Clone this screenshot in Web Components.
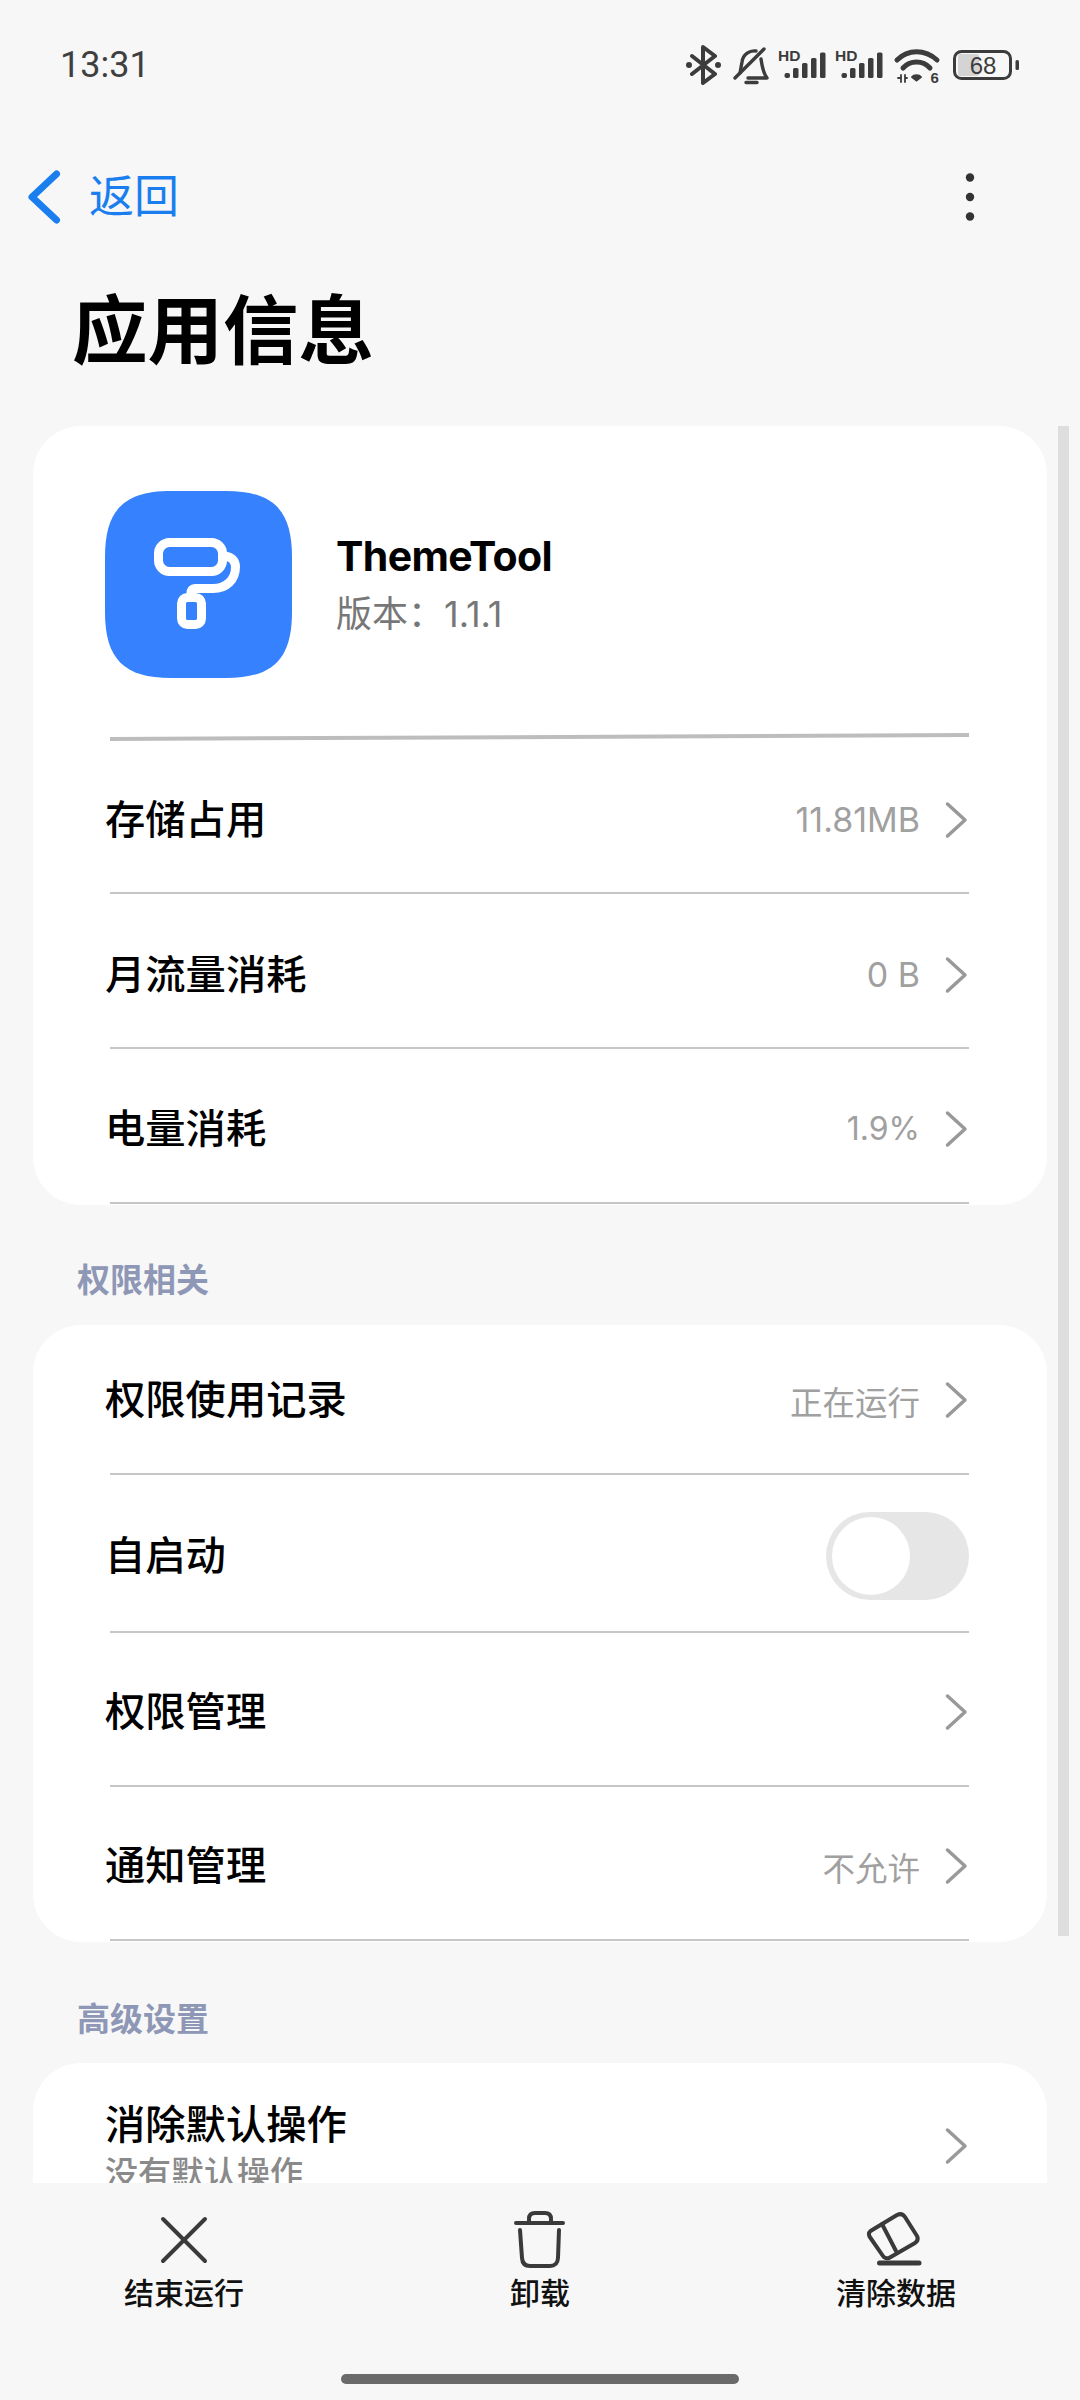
<!DOCTYPE html>
<html lang="zh-CN">
<head>
<meta charset="utf-8">
<title>应用信息</title>
<style>
  html, body { margin: 0; background: #f7f7f7; }
  body { font-family: Inter, "Noto Sans CJK SC", sans-serif; width: 1080px; height: 2400px; overflow: hidden; }
  app-info-page { height: 2400px; }
</style>
</head>
<body>
<app-info-page>
  <status-bar slot="top" time="13:31"></status-bar>
  <nav-bar slot="top" back="返回"></nav-bar>
  <page-title slot="top">应用信息</page-title>

  <settings-card>
    <app-header name="ThemeTool" version="版本：1.1.1"></app-header>
    <settings-row>存储占用<span slot="value">11.81MB</span></settings-row>
    <settings-row>月流量消耗<span slot="value">0 B</span></settings-row>
    <settings-row style="--row-pt:6px;--val:32px">电量消耗<span slot="value">1.9%</span></settings-row>
  </settings-card>

  <section-label>权限相关</section-label>
  <settings-card>
    <settings-row style="--row-h:150px;--row-pt:2px;--val:32.5px">权限使用记录<span slot="value">正在运行</span></settings-row>
    <settings-row nochevron style="--row-h:158px;--row-pt:6px">自启动<toggle-switch slot="end"></toggle-switch></settings-row>
    <settings-row style="--row-h:154px;--row-pt:6px">权限管理</settings-row>
    <settings-row style="--row-h:154px;--row-pt:6px;--val:32.5px">通知管理<span slot="value">不允许</span></settings-row>
  </settings-card>

  <section-label style="--label-h:121px;--label-pt:52px">高级设置</section-label>
  <settings-card>
    <settings-row style="--row-h:168px;--row-pt:0px;--main-shift:4px">消除默认操作<span slot="sub">没有默认操作</span></settings-row>
  </settings-card>

  <action-bar slot="bottom"></action-bar>
</app-info-page>

<script>
class AppInfoPage extends HTMLElement {
    connectedCallback() {
        this.attachShadow({mode: 'open'});
        this.shadowRoot.innerHTML = `
        <style>
            :host { display: flex; flex-direction: column; width: 1080px; background: #f7f7f7; }
            #scroller {
                position: relative;
                flex: 1;
                min-height: 0;
                overflow: hidden;
                padding: 0 33px;
            }
            /* scrollbar lies over the list */
            #thumb {
                position: absolute;
                left: 1058px;
                top: 0;
                width: 11px;
                height: 1510px;
                background: #dedede;
            }
        </style>
        <slot name="top"></slot>
        <div id="scroller"><slot></slot><div id="thumb"></div></div>
        <slot name="bottom"></slot>
        `;
    }
}

class StatusBar extends HTMLElement {
    connectedCallback() {
        this.attachShadow({mode: 'open'});
        this.shadowRoot.innerHTML = `
        <style>
            :host { display: flex; align-items: center; justify-content: space-between; height: 130px; padding: 0 59px 0 60px; box-sizing: border-box; }
            #time { font: 400 36px Roboto, sans-serif; color: #3f3f3f; }
            svg { display: block; font-family: "Liberation Sans", sans-serif; }
        </style>
        <span id="time">${this.getAttribute('time')}</span>
        <svg width="335" height="40" viewBox="687 45 335 40" fill="none" stroke="#3c3c3c" stroke-linecap="round" stroke-linejoin="round">
            <!-- bluetooth -->
            <path d="M693 56 L716 74 L704 83 V47 L716 56 L693 74" stroke-width="4"/>
            <circle cx="690" cy="65" r="3" fill="#3c3c3c" stroke="none"/>
            <circle cx="719" cy="65" r="3" fill="#3c3c3c" stroke="none"/>
            <!-- muted bell -->
            <path d="M741 73 L743 62 C744 54 751 50 757 51 M762 59 C763 66 764 73 768 78 H749 M747 82.5 H758" stroke-width="3.4"/>
            <path d="M736 78 L765 49" stroke-width="3.4"/>
            <!-- signal 1 -->
            <g fill="#3c3c3c" stroke="none">
                <text x="779" y="61" font-size="15.5" font-weight="700">HD</text>
                <rect x="785.5" y="73" width="5.5" height="5" rx="2"/>
                <rect x="794" y="68" width="5.5" height="10" rx="1.5"/>
                <rect x="803" y="63" width="5.5" height="15" rx="1.5"/>
                <rect x="812" y="58" width="5.5" height="20" rx="1.5"/>
                <rect x="821" y="52.5" width="5.5" height="25.5" rx="1.5"/>
                <!-- signal 2 -->
                <text x="836" y="61" font-size="15.5" font-weight="700">HD</text>
                <rect x="842.5" y="73" width="5.5" height="5" rx="2"/>
                <rect x="851" y="68" width="5.5" height="10" rx="1.5"/>
                <rect x="860" y="63" width="5.5" height="15" rx="1.5"/>
                <rect x="869" y="58" width="5.5" height="20" rx="1.5"/>
                <rect x="878" y="52.5" width="5.5" height="25.5" rx="1.5"/>
            </g>
            <!-- wifi 6 -->
            <path d="M898 60 C909 49 926 49 938 60" stroke-width="5"/>
            <path d="M904 68 C911 60 924 60 931 68" stroke-width="5"/>
            <path d="M913 77 C915 74.5 920 74.5 922 77 L917.5 80.5 Z" fill="#3c3c3c" stroke-width="2"/>
            <path d="M899 78 H902 M902 75 V82 M906 75 V82 M906 78 H908" stroke-width="1.8"/>
            <text x="931.5" y="82.5" font-size="15" font-weight="700" fill="#3c3c3c" stroke="none">6</text>
            <!-- battery -->
            <rect x="959" y="54" width="21" height="22" rx="2" fill="#d4d4d4" stroke="none"/>
            <rect x="955.5" y="51.5" width="56" height="27" rx="7" stroke-width="3"/>
            <rect x="1016.5" y="60" width="3.5" height="10" rx="1.5" fill="#3c3c3c" stroke="none"/>
            <text x="984" y="73.5" font-size="24" text-anchor="middle" fill="#3c3c3c" stroke="none">68</text>
        </svg>
        `;
    }
}

class NavBar extends HTMLElement {
    connectedCallback() {
        this.attachShadow({mode: 'open'});
        this.shadowRoot.innerHTML = `
        <style>
            :host { display: flex; align-items: center; height: 134px; padding: 0 105px 0 27px; }
            svg { display: block; }
            #label { margin-left: 28px; font-size: 45px; line-height: 134px; color: #1a7eef; flex: 1; }
        </style>
        <svg width="34" height="54" viewBox="0 0 34 54" fill="none" stroke="#1a7eef" stroke-width="7" stroke-linecap="round" stroke-linejoin="round">
            <path d="M29.5 4 L5 27 L29.5 50"/>
        </svg>
        <span id="label">${this.getAttribute('back')}</span>
        <svg width="10" height="50" viewBox="0 0 10 50" fill="#333">
            <circle cx="5" cy="5.5" r="4.2"/>
            <circle cx="5" cy="25" r="4.2"/>
            <circle cx="5" cy="44.5" r="4.2"/>
        </svg>
        `;
    }
}

class PageTitle extends HTMLElement {
    connectedCallback() {
        this.attachShadow({mode: 'open'});
        this.shadowRoot.innerHTML = `
        <style>
            :host { display: block; height: 162px; box-sizing: border-box; padding: 0 0 28px 72px; font-size: 75.5px; line-height: 134px; font-weight: 700; color: #000; }
        </style>
        <slot></slot>
        `;
    }
}

class SettingsCard extends HTMLElement {
    connectedCallback() {
        this.attachShadow({mode: 'open'});
        this.shadowRoot.innerHTML = `
        <style>
            :host { display: block; width: 1014px; background: #fff; border-radius: 48px; padding-bottom: 1px; }
        </style>
        <slot></slot>
        `;
    }
}

class AppHeader extends HTMLElement {
    connectedCallback() {
        this.attachShadow({mode: 'open'});
        this.shadowRoot.innerHTML = `
        <style>
            :host { display: block; }
            #top { display: flex; align-items: center; padding: 65px 0 55px 72px; }
            #icon { display: block; width: 187px; height: 187px; flex: none; }
            #text { margin-left: 44px; }
            #name { font-size: 41px; line-height: 50px; font-weight: 700; color: #000; letter-spacing: -0.6px; }
            #version { font-size: 36px; line-height: 48px; color: #777; margin-top: 9px; }
            #sep { height: 8px; margin: 0 78px -2px 77px; background: #bdbdbd; clip-path: polygon(0 4px, 100% 0, 100% 4px, 0 100%); }
        </style>
        <div id="top">
            <svg id="icon" viewBox="0 0 187 187">
                <path d="M66 0 H121 C168 0 187 19 187 66 V121 C187 168 168 187 121 187 H66 C19 187 0 168 0 121 V66 C0 19 19 0 66 0 Z" fill="#3681fd"/>
                <g fill="none" stroke="#fff" stroke-width="9" stroke-linecap="round" stroke-linejoin="round">
                    <rect x="53.5" y="51.5" width="64" height="29" rx="11"/>
                    <path d="M120 65 C127 66 130.5 70 130.5 76 C130.5 88 122 97.5 108 97.5 H90 Q86 97.5 86 102 V106"/>
                    <rect x="76.5" y="106.5" width="20" height="27" rx="6"/>
                </g>
            </svg>
            <div id="text">
                <div id="name">${this.getAttribute('name')}</div>
                <div id="version">${this.getAttribute('version')}</div>
            </div>
        </div>
        <div id="sep"></div>
        `;
    }
}

class SettingsRow extends HTMLElement {
    connectedCallback() {
        this.attachShadow({mode: 'open'});
        const chevron = this.hasAttribute('nochevron') ? '' : `
            <svg id="chev" width="24" height="40" viewBox="0 0 24 40" fill="none" stroke="#999" stroke-width="3.5" stroke-linecap="round" stroke-linejoin="round">
                <path d="M3.5 4 L21 20 L3.5 36"/>
            </svg>`;
        this.shadowRoot.innerHTML = `
        <style>
            :host { display: flex; flex-direction: column; box-sizing: border-box; height: var(--row-h, 155px); padding: var(--row-pt, 8px) 78px 0 72px; }
            #body { flex: 1; min-height: 0; display: flex; align-items: center; }
            #main { flex: 1; margin-top: var(--main-shift, 0); font-size: 40.3px; line-height: 50px; font-weight: 500; color: #000; }
            #sub { display: block; font-size: 33px; line-height: 46px; font-weight: 500; color: #8a8a8a; }
            #value { font-size: var(--val, 34px); color: #a0a0a0; }
            #chev { display: block; margin: 0 1px 0 24px; flex: none; }
            #line { height: 2px; margin-left: 5px; background: #c6c6c6; flex: none; }
        </style>
        <div id="body">
            <div id="main"><slot></slot><span id="sub"><slot name="sub"></slot></span></div>
            <span id="value"><slot name="value"></slot></span>
            <slot name="end"></slot>
            ${chevron}
        </div>
        <div id="line"></div>
        `;
    }
}

class SectionLabel extends HTMLElement {
    connectedCallback() {
        this.attachShadow({mode: 'open'});
        this.shadowRoot.innerHTML = `
        <style>
            :host { display: block; box-sizing: border-box; height: var(--label-h, 120px); padding: var(--label-pt, 50px) 0 0 44px; font-size: 33px; line-height: 50px; font-weight: 700; color: #8e97b5; }
        </style>
        <slot></slot>
        `;
    }
}

class ToggleSwitch extends HTMLElement {
    connectedCallback() {
        this.attachShadow({mode: 'open'});
        this.shadowRoot.innerHTML = `
        <style>
            :host { display: block; width: 143px; height: 88px; box-sizing: border-box; padding: 5px 6px; border-radius: 44px; background: #e6e6e6; }
            div { width: 78px; height: 78px; border-radius: 50%; background: #fff; }
        </style>
        <div></div>
        `;
    }
}

class ActionBar extends HTMLElement {
    connectedCallback() {
        this.attachShadow({mode: 'open'});
        this.shadowRoot.innerHTML = `
        <style>
            :host { display: block; position: relative; height: 217px; box-sizing: border-box; background: #f7f7f7; padding: 27px 0 0 6px; }
            #items { display: grid; grid-template-columns: repeat(3, 356px); }
            .item { display: flex; flex-direction: column; align-items: center; }
            svg { display: block; }
            .item span { margin-top: 3px; font-size: 30px; line-height: 40px; font-weight: 500; color: #111; }
            #home { width: 398px; height: 10px; margin: 61px 0 0 335px; border-radius: 5px; background: #6a6a6a; }
        </style>
        <div id="items">
            <div class="item">
                <svg width="60" height="60" viewBox="154 2210 60 60" fill="none" stroke="#3a3a3a" stroke-width="4" stroke-linecap="round">
                    <path d="M163 2219 L205 2261 M205 2219 L163 2261"/>
                </svg>
                <span>结束运行</span>
            </div>
            <div class="item">
                <svg width="60" height="60" viewBox="510 2210 60 60" fill="none" stroke="#3a3a3a" stroke-width="4" stroke-linecap="round" stroke-linejoin="round">
                    <path d="M516 2223 H563"/>
                    <path d="M529 2223 V2219 Q529 2213 535 2213 H545 Q551 2213 551 2219 V2223"/>
                    <path d="M520 2230 L522 2258 Q522.5 2266 530 2266 H550 Q557.5 2266 558 2258 L559 2230"/>
                </svg>
                <span>卸载</span>
            </div>
            <div class="item">
                <svg width="60" height="60" viewBox="866 2210 60 60" fill="none" stroke="#3a3a3a" stroke-width="4" stroke-linecap="round" stroke-linejoin="round">
                    <path d="M870.5 2231 L897 2215 Q902 2212.5 905 2217 L917 2236 Q919 2240 915 2243 L889 2258 Q885 2259 883 2256 L869.5 2236.5 Q868 2233 870.5 2231 Z"/>
                    <path d="M882 2224 L896 2251"/>
                    <path d="M879.5 2263 H919" stroke-width="5"/>
                </svg>
                <span>清除数据</span>
            </div>
        </div>
        <div id="home"></div>
        `;
    }
}

customElements.define('app-info-page', AppInfoPage);
customElements.define('status-bar', StatusBar);
customElements.define('nav-bar', NavBar);
customElements.define('page-title', PageTitle);
customElements.define('settings-card', SettingsCard);
customElements.define('app-header', AppHeader);
customElements.define('settings-row', SettingsRow);
customElements.define('section-label', SectionLabel);
customElements.define('toggle-switch', ToggleSwitch);
customElements.define('action-bar', ActionBar);
</script>
</body>
</html>
